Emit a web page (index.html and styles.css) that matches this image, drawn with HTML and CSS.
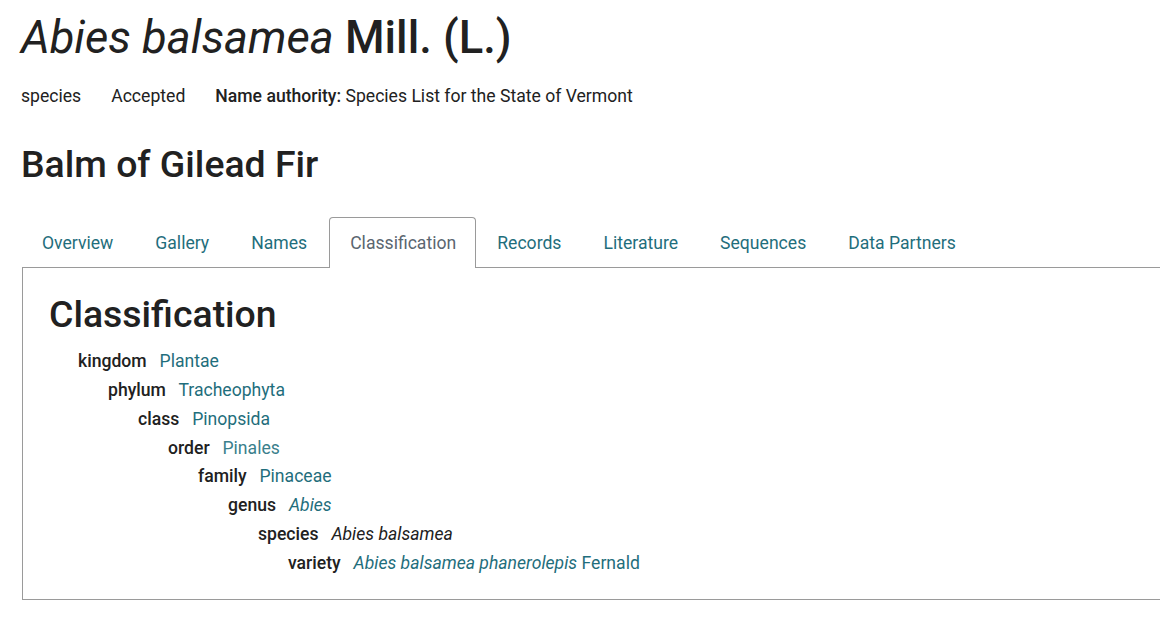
FILE: index.html
```html
<!DOCTYPE html>
<html>
<head>
<meta charset="utf-8">
<link rel="stylesheet" href="styles.css">
</head>
<body>
<div class="page">
  <h1 class="title"><i>Abies balsamea</i> Mill. (L.)</h1>
  <div class="meta">
    <span>species</span>
    <span>Accepted</span>
    <span><b>Name authority:</b> Species List for the State of Vermont</span>
  </div>
  <h2 class="common">Balm of Gilead Fir</h2>
  <ul class="tabs">
    <li><a href="#">Overview</a></li>
    <li><a href="#">Gallery</a></li>
    <li><a href="#">Names</a></li>
    <li class="active"><a href="#">Classification</a></li>
    <li><a href="#">Records</a></li>
    <li><a href="#">Literature</a></li>
    <li><a href="#">Sequences</a></li>
    <li><a href="#">Data Partners</a></li>
  </ul>
  <div class="panel">
    <h2 class="panel-title">Classification</h2>
    <ul class="tree root">
      <li><b>kingdom</b> <a href="#">Plantae</a>
        <ul class="tree"><li><b>phylum</b> <a href="#">Tracheophyta</a>
          <ul class="tree"><li><b>class</b> <a href="#">Pinopsida</a>
            <ul class="tree"><li><b>order</b> <a href="#" class="light">Pinales</a>
              <ul class="tree"><li><b>family</b> <a href="#">Pinaceae</a>
                <ul class="tree"><li><b>genus</b> <a href="#"><i>Abies</i></a>
                  <ul class="tree"><li><b>species</b> <i>Abies balsamea</i>
                    <ul class="tree"><li><b>variety</b> <a href="#"><i>Abies balsamea phanerolepis</i> Fernald</a></li></ul>
                  </li></ul>
                </li></ul>
              </li></ul>
            </li></ul>
          </li></ul>
        </li></ul>
      </li>
    </ul>
  </div>
</div>
</body>
</html>
```
FILE: styles.css
```css
html, body {
  margin: 0;
  padding: 0;
  overflow: hidden;
  background: #fff;
}
body {
  font-family: Roboto, "Liberation Sans", sans-serif;
  font-size: 17.6px;
  color: #212121;
}
.page {
  padding: 0 0 0 21px;
  width: 1180px;
}
a {
  color: #1f6e7c;
  text-decoration: none;
}
.title {
  font-size: 45.3px;
  font-weight: 500;
  margin: 10px 0 0 0;
  line-height: 56px;
}
.title i {
  font-weight: 400;
}
.meta {
  display: flex;
  gap: 30px;
  margin-top: 18px;
  line-height: 24px;
}
.meta b {
  font-weight: 500;
}
.common {
  font-size: 37.4px;
  font-weight: 500;
  margin: 34px 0 0 0;
  line-height: 44px;
}
.tabs {
  list-style: none;
  display: flex;
  margin: 31px 0 0 0;
  padding: 0;
  position: relative;
  z-index: 1;
}
.tabs li {
  border: 1px solid transparent;
  border-bottom: none;
  border-radius: 4px 4px 0 0;
  margin-bottom: -1px;
}
.tabs li a {
  display: block;
  padding: 0 20px;
  line-height: 50px;
}
.tabs li.active {
  border-color: #9a9a9a;
  background: #fff;
  margin-left: 1px;
}
.tabs li.active a {
  color: #5b6670;
  padding-right: 19px;
}
.panel {
  border: 1px solid #9a9a9a;
  margin-left: 1px;
  height: 333px;
  box-sizing: border-box;
  padding: 0 26px;
}
.panel-title {
  font-size: 37.4px;
  font-weight: 500;
  margin: 24px 0 0 0;
  line-height: 44px;
}
.tree {
  list-style: none;
  margin: 0;
  padding: 0 0 0 30px;
}
.tree.root {
  margin-top: 11px;
  padding-left: 29px;
}
.tree li {
  line-height: 28.86px;
}
.tree b {
  font-weight: 500;
  margin-right: 8.5px;
}
.tree .light {
  color: #3a7f8c;
}
```
